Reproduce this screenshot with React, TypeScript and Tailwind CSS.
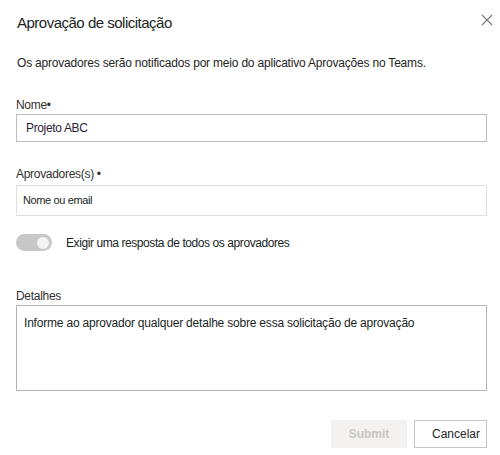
import React from 'react';

const CloseIcon = () => (
  <svg width="12" height="12" viewBox="0 0 12 12" className="text-[#7a7876]">
    <path d="M1 1 L11 11 M11 1 L1 11" stroke="currentColor" strokeWidth="1.1" fill="none" />
  </svg>
);

const Field = ({ label, children, className }: { label: string; children: React.ReactNode; className: string }) => (
  <div className={`flex flex-col ${className}`}>
    <label className="text-[12px] leading-4 text-[#323130] tracking-[-0.3px]">{label}</label>
    {children}
  </div>
);

const ApprovalDialog = () => {
  return (
    <div className="w-[500px] h-[455px] bg-white flex flex-col font-['Liberation_Sans',Arial,sans-serif] text-[#252423]">
      <div className="flex items-start justify-between pl-[17px] pr-[7px] pt-[11px]">
        <h1 className="text-[15px] leading-6 text-[#201f1e] tracking-[-0.5px]">Aprovação de solicitação</h1>
        <button className="mt-[3px]">
          <CloseIcon />
        </button>
      </div>

      <div className="flex flex-col pl-4 pr-[13px]">
        <p className="mt-[20px] pl-[1px] text-[12px] leading-4 tracking-[-0.2px]">
          Os aprovadores serão notificados por meio do aplicativo Aprovações no Teams.
        </p>

        <Field label="Nome•" className="mt-[26px]">
          <div className="mt-[1px] h-[28px] border border-[#bdbdbd] flex items-center pl-[9px] text-[12px] text-[#2b1d35] tracking-[-0.35px]">
            Projeto ABC
          </div>
        </Field>

        <Field label="Aprovadores(s) •" className="mt-[24px]">
          <div className="mt-[3px] h-[31px] border border-[#e1dfdd] flex items-center pl-[6px] text-[11px] text-[#201f1e] tracking-[-0.38px]">
            Nome ou email
          </div>
        </Field>

        <div className="mt-[18px] flex items-center gap-[14px]">
          <div className="w-[36px] h-[17px] rounded-full bg-[#c8c8c8] flex items-center justify-end pr-[3px]">
            <div className="w-[12px] h-[12px] rounded-full bg-[#f4f4f4]" />
          </div>
          <span className="text-[12px] leading-4 text-[#201f1e] tracking-[-0.42px]">
            Exigir uma resposta de todos os aprovadores
          </span>
        </div>

        <Field label="Detalhes" className="mt-[37px]">
          <div className="mt-[1px] h-[86px] border border-[#b3b3b3] pl-[7px] pt-[9px] text-[12px] leading-4 text-[#201f1e] tracking-[-0.2px]">
            Informe ao aprovador qualquer detalhe sobre essa solicitação de aprovação
          </div>
        </Field>

        <div className="mt-[29px] flex justify-end gap-[7px]">
          <button className="w-[76px] h-[28px] bg-[#f3f2f1] text-[#c8c6c4] text-[12px] font-bold">
            Submit
          </button>
          <button className="w-[73px] h-[28px] border border-[#c8c6c4] bg-white text-[12px] text-[#201f1e] text-right pr-[6px]">
            Cancelar
          </button>
        </div>
      </div>
    </div>
  );
};

export default function App() {
  return <ApprovalDialog />;
}
